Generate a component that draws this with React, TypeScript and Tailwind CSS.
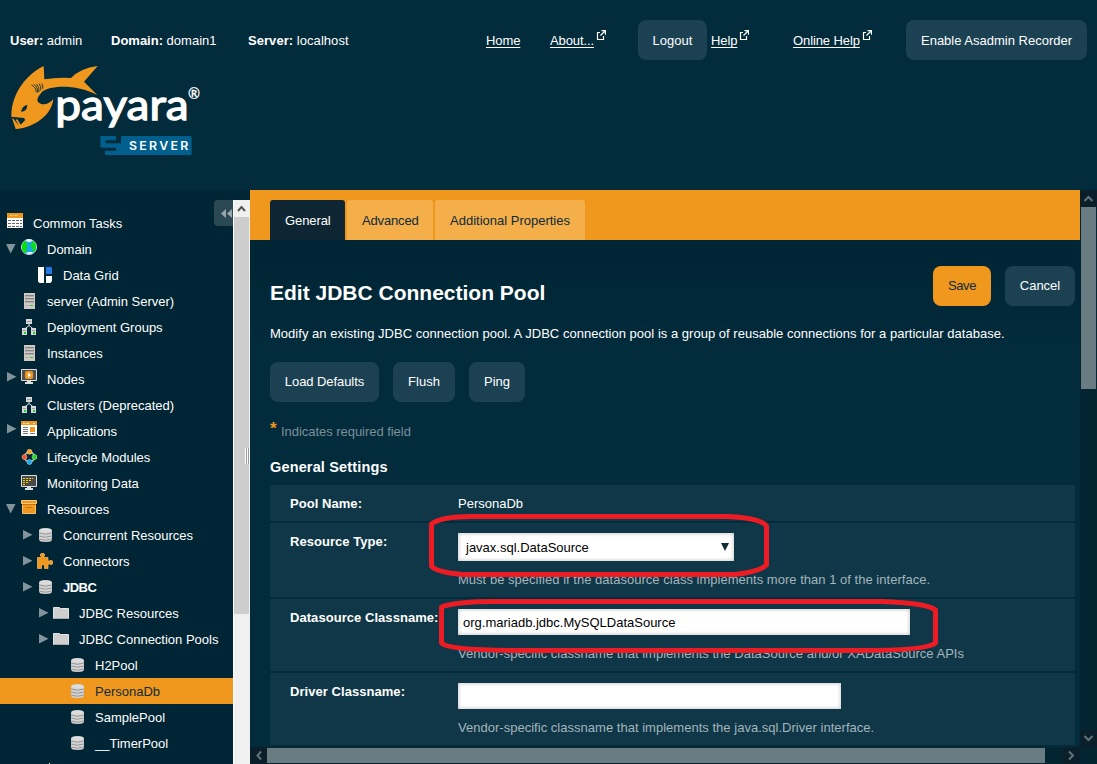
import React from "react";

type IconName =
  | "tasks" | "domain" | "grid" | "server" | "cluster" | "nodes" | "apps"
  | "lifecycle" | "monitor" | "resources" | "db" | "connector" | "folder";

const drawings: Record<IconName, React.ReactNode> = {
  tasks: (
    <g>
      <path fill="#fff" d="M0 0h16v15H0z" />
      <path fill="#f0981d" d="M0 0h16v5H0z" />
      <path stroke="#fbd9a5" d="M3 2.500h2M6 2.500h1M8 2.500h2" />
      <path stroke="#666" strokeDasharray="3 1" d="M1 7.500h3M5 7.500h10M1 10.500h14M1 13.500h14" />
    </g>
  ),
  domain: (
    <g>
      <circle cx="8" cy="8" r="7.600" fill="#18a8e8" stroke="#dff5f5" strokeWidth=".8" />
      <path fill="#0be00b" d="M4 2 6 3 5 5 7 7 5 9 6 13 4 14 1 11 1 5zM11 2l3 2 1 5-2 4-2-1 1-3-3-2 2-3z" />
      <path fill="#eef" d="M5 1q3-2 6 0l-1 2H6zM5 14l2-1 4 0 1 1q-3 2-7 0z" />
    </g>
  ),
  grid: (
    <g>
      <path fill="#fff" d="M1 0h6v16H2.500L1 14.500zM9 9h6v5l-1.500 2H9z" />
      <path fill="#2478e4" d="M9 0h5l1 1v6H9z" />
    </g>
  ),
  server: (
    <g>
      <path fill="#d0c8c4" d="M3 0h11v16H3z" />
      <path stroke="#858585" d="M4 2.500h9M4 5.500h9M4 8.500h9" />
      <path stroke="#b0b0b0" d="M4 3.500h9M4 6.500h9M4 9.500h9M4 12.500h4" />
      <path stroke="#20c820" d="M9 12.500h3" />
    </g>
  ),
  cluster: (
    <g>
      <path stroke="#dedede" fill="none" d="M8 5v1.500L3.500 10M8 6.500 12.500 10" />
      <path fill="#d8d8d8" d="M5 0h6v5H5zM1 9h5v7H1zM10 9h5v7h-5z" />
      <path stroke="#999" d="M6 2.500h4M2 11.500h3M11 11.500h3" />
      <path fill="#20d030" d="M3 13h2v2H3zM12 13h2v2h-2z" />
    </g>
  ),
  nodes: (
    <g>
      <path fill="#505050" stroke="#ddd" d="M.5 .5h15v11H.5z" />
      <path fill="#ddd" d="M6 12h4v1h2v2H4v-2h2z" />
      <rect x="4" y="2" width="8" height="8" rx="2" fill="#f0981d" />
      <path fill="#fff" d="M7 3.500 10 6 7 8.500z" />
    </g>
  ),
  apps: (
    <g>
      <path fill="#fff" d="M0 0h16v15H0z" />
      <path fill="#f0981d" d="M0 0h16v4H0zM9 6h5v5H9z" />
      <path stroke="#ffe3b5" d="M2 2.500h2M5 2.500h3M12 2.500h2" />
      <path stroke="#777" d="M2 6.500h5M2 8.500h5M2 10.500h5M2 12.500h5M9 12.500h5" />
    </g>
  ),
  lifecycle: (
    <g>
      <circle cx="8.500" cy="8" r="5" fill="none" stroke="#b9c4c8" strokeWidth="1.500" />
      <circle cx="8.500" cy="2.800" r="2.500" fill="#f5a21c" stroke="#ffe0a0" strokeWidth=".5" />
      <circle cx="3.500" cy="8" r="2.500" fill="#f5512a" stroke="#ffc0a0" strokeWidth=".5" />
      <circle cx="13.500" cy="8" r="2.500" fill="#20d820" stroke="#b0f0b0" strokeWidth=".5" />
      <circle cx="8.500" cy="13" r="2.500" fill="#18a8e8" stroke="#b0e0ff" strokeWidth=".5" />
    </g>
  ),
  monitor: (
    <g>
      <path fill="#484848" stroke="#ddd" d="M.5 .5h15v11H.5z" />
      <path stroke="#f5d000" strokeDasharray="2 1" d="M2 3.500h10M2 5.500h9M2 7.500h6M2 9.500h3" />
      <path fill="#ddd" d="M6 12h4v1h2v2H4v-2h2z" />
    </g>
  ),
  resources: (
    <g>
      <path fill="#f0981d" stroke="#f9c070" d="M1.500 3.500h13v10h-13z" />
      <path fill="#f0981d" stroke="#fcc880" d="M.5 .5h15v3H.5z" />
      <path stroke="#c87410" d="M1 4.500h14M5 7.500h6" />
    </g>
  ),
  db: (
    <g>
      <path fill="#d2d2d2" d="M2 3.500Q2 1 8.500 1T15 3.500v9Q15 15 8.500 15T2 12.500z" />
      <ellipse cx="8.500" cy="3.500" rx="6" ry="2" fill="#dcdcdc" />
      <path fill="none" stroke="#999" d="M2 6q6.500 2.500 13 0M2 9q6.500 2.500 13 0M2 12q6.500 2.500 13 0" />
    </g>
  ),
  connector: (
    <path
      fill="#f0981d"
      stroke="#f8bd6a"
      strokeWidth=".7"
      d="M.5 4.500H4V3.500A2.100 2.100 0 1 1 7 3.500V4.500h4V8h1.500a2.100 2.100 0 1 1 0 3H11v4.600H7.500V13a1.500 1.500 0 1 0-3 0v2.600H.5z"
    />
  ),
  folder: (
    <g>
      <path fill="#cfcfcf" stroke="#e3e3e3" d="M.5 2.500h6l1 1h8v10H.5z" />
      <path stroke="#aaa" d="M1 13.500h14.500" />
    </g>
  ),
};

interface Node {
  label: string;
  icon: IconName;
  pad: string;
  arrow?: "right" | "down" | "nested";
  iconTop?: string;
  bold?: boolean;
  selected?: boolean;
}

const nodes: Node[] = [
  { label: "Domain", icon: "domain", pad: "pl-[5px]", arrow: "down", iconTop: "pt-[3px]" },
  { label: "Data Grid", icon: "grid", pad: "pl-[21px]" },
  { label: "server (Admin Server)", icon: "server", pad: "pl-[5px]" },
  { label: "Deployment Groups", icon: "cluster", pad: "pl-[5px]" },
  { label: "Instances", icon: "server", pad: "pl-[5px]" },
  { label: "Nodes", icon: "nodes", pad: "pl-[5px]", arrow: "right", iconTop: "pt-[3px]" },
  { label: "Clusters (Deprecated)", icon: "cluster", pad: "pl-[5px]" },
  { label: "Applications", icon: "apps", pad: "pl-[5px]", arrow: "right", iconTop: "pt-[3px]" },
  { label: "Lifecycle Modules", icon: "lifecycle", pad: "pl-[5px]" },
  { label: "Monitoring Data", icon: "monitor", pad: "pl-[5px]" },
  { label: "Resources", icon: "resources", pad: "pl-[5px]", arrow: "down", iconTop: "pt-[4px]" },
  { label: "Concurrent Resources", icon: "db", pad: "pl-[21px]", arrow: "nested" },
  { label: "Connectors", icon: "connector", pad: "pl-[21px]", arrow: "nested" },
  { label: "JDBC", icon: "db", pad: "pl-[21px]", arrow: "nested", bold: true },
  { label: "JDBC Resources", icon: "folder", pad: "pl-[37px]", arrow: "nested" },
  { label: "JDBC Connection Pools", icon: "folder", pad: "pl-[37px]", arrow: "nested" },
  { label: "H2Pool", icon: "db", pad: "pl-[53px]" },
  { label: "PersonaDb", icon: "db", pad: "pl-[53px]", selected: true },
  { label: "SamplePool", icon: "db", pad: "pl-[53px]" },
  { label: "__TimerPool", icon: "db", pad: "pl-[53px]" },
];

function Icon({ name }: { name: IconName }) {
  return (
    <svg className="size-4 shrink-0" viewBox="0 0 16 16">
      {drawings[name]}
    </svg>
  );
}

function TreeRow({ node }: { node: Node }) {
  return (
    <div className={`flex h-[26px] ${node.pad} ${node.selected ? "bg-[#f0981d] text-[#0d2b3a]" : ""}`}>
      <svg className="h-[26px] w-4 shrink-0" viewBox="0 0 16 26" fill="#82939a">
        {node.arrow === "down" && <path d="M1 8h9.500L5.700 17.500z" />}
        {node.arrow === "right" && <path d="M2 6v9.500L11.500 10.700z" />}
        {node.arrow === "nested" && <path d="M2 8v9.500L11.500 12.700z" />}
      </svg>
      <span className={`w-[26px] shrink-0 ${node.iconTop ?? "pt-[5px]"}`}>
        <Icon name={node.icon} />
      </span>
      <span className={`leading-[27px] ${node.bold ? "font-bold tracking-[-0.5px]" : ""}`}>{node.label}</span>
    </div>
  );
}

function Logo() {
  return (
    <svg className="ml-[10px] block h-[92px] w-[192px]" viewBox="30 135 576 276">
      <path
        fill="#f0981d"
        d="M131 138C85 160 34 215 34 290L48 292 72 294 76 300 62 314 52 298 47 299 57 318 41 297 36 294 47 327C95 325 155 290 160 237 150 250 134 256 122 251 106 244 112 232 124 218 142 197 225 190 292 225L252 185 293 138Q240 145 213 174 170 172 133 178z"
      />
      <path fill="#022b3b" d="M63 275Q66 259 82 254 82 274 63 275z" />
      <path fill="none" stroke="#022b3b" strokeWidth="2.500" d="M94 195q14 6 15 22M101 193q13 8 12 25M109 192q10 8 8 24M117 191q8 9 5 20M125 190q5 8 3 16" />
      <text x="166" y="299" fill="#fff" stroke="#fff" strokeWidth="4" fontFamily="Lato, sans-serif" fontSize="128" textLength="400" lengthAdjust="spacingAndGlyphs">
        payara
      </text>
      <text x="564" y="237" fill="#fff" stroke="#fff" strokeWidth="1" fontFamily="Lato, sans-serif" fontSize="44" textLength="36" lengthAdjust="spacingAndGlyphs">
        ®
      </text>
      <path
        fill="#005f8c"
        d="M304 348h44v13h-31v9h46v-22h208q4 0 4 4v49q0 4-4 4H319q-4 0-4-4v-9h33v-9h-42q-5 0-5-5v-26q0-4 3-4z"
      />
      <text x="387" y="390" fill="#fff" fontFamily="Inter, Lato, sans-serif" fontWeight="600" fontSize="37" textLength="178">
        SERVER
      </text>
    </svg>
  );
}

function ExternalIcon() {
  return (
    <svg className="-mt-[12px] ml-[2px] h-[10px] w-[10px]" viewBox="0 0 10 10" fill="none" stroke="#fff" strokeWidth="1.200">
      <path d="M4 2.500H1.500v7h6V6M4.500 5.500 9 1M5.500 .7h4v4" />
    </svg>
  );
}

function HeaderLink({ label, width, external }: { label: string; width: string; external?: boolean }) {
  return (
    <span className={`flex shrink-0 items-center pt-[2px] ${width}`}>
      <a className="tracking-[-0.1px] underline underline-offset-[2px]">{label}</a>
      {external && <ExternalIcon />}
    </span>
  );
}

function Button({ label, className = "bg-[#1b4152] pb-px text-white" }: { label: string; className?: string }) {
  return (
    <button className={`h-10 shrink-0 rounded-[8px] text-center whitespace-nowrap ${className}`}>{label}</button>
  );
}

function Field({ label, height, hint, children }: { label: string; height: string; hint?: string; children: React.ReactNode }) {
  return (
    <div className={`flex bg-[#0f3747] pl-5 ${height}`}>
      <div className="w-[168px] shrink-0 pt-[9px] leading-[19px] font-bold tracking-[0.05px] whitespace-nowrap">{label}</div>
      <div>
        {children}
        {hint && <div className="mt-[9px] leading-[19px] tracking-[0.02px] whitespace-nowrap text-[#a3b5bd]">{hint}</div>}
      </div>
    </div>
  );
}

function Chevron({ d, stroke = "#5f737b" }: { d: string; stroke?: string }) {
  return (
    <svg className="block size-[17px]" viewBox="0 0 17 17" fill="none" stroke={stroke} strokeWidth="2">
      <path d={d} />
    </svg>
  );
}

const inset = "shadow-[inset_0_0_4px_rgba(0,0,0,0.28)]";

export default function App() {
  return (
    <div className="relative h-[764px] w-[1097px] overflow-hidden bg-[#022b3b] font-['Liberation_Sans',Arial,sans-serif] text-[13px] text-white">
      <header className="h-[190px] pt-5">
        <div className="flex h-10 items-center pl-[10px]">
          <span className="w-[101px] shrink-0 pt-[2px]"><b>User:</b> admin</span>
          <span className="w-[137px] shrink-0 pt-[2px]"><b>Domain:</b> domain1</span>
          <span className="w-[238px] shrink-0 pt-[2px] tracking-[0.05px]"><b>Server:</b> localhost</span>
          <HeaderLink label="Home" width="w-[64px]" />
          <HeaderLink label="About..." width="w-[88px]" external />
          <Button label="Logout" className="w-[69px] bg-[#1b4152] pt-px" />
          <HeaderLink label="Help" width="ml-[4px] w-[82px]" external />
          <HeaderLink label="Online Help" width="w-[113px]" external />
          <Button label="Enable Asadmin Recorder" className="w-[181px] bg-[#1b4152] pt-px" />
        </div>
        <div className="pt-[5px]"><Logo /></div>
      </header>

      <div className="flex h-[574px]">
        <aside className="relative flex w-[250px] shrink-0 bg-[#002534]">
          <div className="w-[233px] pt-5">
            <div className="flex h-[26px] pl-[7px]">
              <span className="w-[26px] shrink-0 pt-[3px]"><Icon name="tasks" /></span>
              <span className="leading-[27px]">Common Tasks</span>
            </div>
            {nodes.map((n) => (
              <TreeRow key={n.label} node={n} />
            ))}
            <svg className="mt-[7px] ml-[49px] block h-px w-px bg-white" />
          </div>
          <div className="mt-[10px] w-[17px] border-l border-white bg-[#f0f0f0]">
            <Chevron d="M4 11 7.500 7 11 11" stroke="#555" />
            <div className="h-[397px] w-[15px] bg-[#cdcdcd]" />
          </div>
          <div className="absolute top-[10px] left-[214px] flex h-[26px] w-[19px] items-center rounded-l-[4px] bg-[#8d9ba1]/30 pl-[7px]">
            <svg className="h-[9px] w-[11px]" viewBox="0 0 11 9" fill="#9aa6ab">
              <path d="M5 0v9L0 4.500zM11 0v9L6 4.500z" />
            </svg>
          </div>
          <div className="absolute top-[258px] left-[245px] flex h-4 w-[5px] justify-between border-x border-white bg-[#999] px-px">
            <span className="w-px bg-white" />
          </div>
        </aside>

        <main className="flex w-[830px] shrink-0 flex-col">
          <div className="flex h-[50px] shrink-0 items-end gap-[2px] bg-[#f0981d] pl-5 text-[#0d2b3a]">
            <div className="h-10 w-[75px] rounded-t-[3px] bg-[#0e2634] pl-[15px] leading-[41px] tracking-[-0.1px] text-white">General</div>
            <div className="h-10 w-[86px] rounded-t-[3px] bg-[#f4ae4a] pl-[15px] leading-[41px] tracking-[-0.15px]">Advanced</div>
            <div className="h-10 w-[150px] rounded-t-[3px] bg-[#f4ae4a] pl-[15px] leading-[41px]">Additional Properties</div>
          </div>
          <div className="h-[507px] overflow-hidden bg-linear-to-b from-[#002534] to-[#022b3b] to-[110px] pr-[5px] pl-5">
            <div className="flex h-[66px] pt-[26px]">
              <h1 className="grow pt-[14px] text-[21px] leading-[26px] font-bold">Edit JDBC Connection Pool</h1>
              <div className="flex gap-[14px]">
                <Button label="Save" className="w-[58px] bg-[#f0981d] pb-px tracking-[-0.4px] text-[#0d2b3a]" />
                <Button label="Cancel" className="w-[70px] bg-[#1b4152] pb-px" />
              </div>
            </div>
            <p className="mt-[18px] h-5 leading-[20px] tracking-[0.02px] whitespace-nowrap">
              Modify an existing JDBC connection pool. A JDBC connection pool is a group of reusable connections for a particular database.
            </p>
            <div className="mt-[18px] flex gap-[14px]">
              <Button label="Load Defaults" className="w-[109px] bg-[#1b4152] pb-px tracking-[-0.07px]" />
              <Button label="Flush" className="w-[62px] bg-[#1b4152] pb-px" />
              <Button label="Ping" className="w-[56px] bg-[#1b4152] pb-px" />
            </div>
            <div className="mt-[19px] flex h-5 leading-[21px] text-[#7b909a]">
              <b className="-mt-[3px] w-[11px] text-[17px] text-[#f0981d]">*</b>
              <span className="tracking-[-0.04px]">Indicates required field</span>
            </div>
            <h2 className="mt-4 h-7 text-[14.500px] leading-[20px] font-bold tracking-[0.15px]">General Settings</h2>
            <div className="flex flex-col gap-[2px]">
              <Field label="Pool Name:" height="h-[36px]">
                <div className="pt-[9px] leading-[19px]">PersonaDb</div>
              </Field>
              <Field label="Resource Type:" height="h-[74px]" hint="Must be specified if the datasource class implements more than 1 of the interface.">
                <div className={`mt-[10px] flex h-7 w-[276px] items-center justify-between bg-white pr-[5px] pl-2 text-black ${inset}`}>
                  <span className="pt-px">javax.sql.DataSource</span>
                  <svg className="h-2 w-2" viewBox="0 0 8 8"><path fill="#0d2b3a" d="M0 0h8L4 8z" /></svg>
                </div>
              </Field>
              <Field label="Datasource Classname:" height="h-[72px]" hint="Vendor-specific classname that implements the DataSource and/or XADataSource APIs">
                <div className={`mt-[10px] h-[26px] w-[452px] bg-white pl-[5px] leading-[27px] text-black ${inset}`}>org.mariadb.jdbc.MySQLDataSource</div>
              </Field>
              <Field label="Driver Classname:" height="h-[72px]" hint="Vendor-specific classname that implements the java.sql.Driver interface.">
                <div className={`mt-[10px] h-[26px] w-[383px] bg-white ${inset}`} />
              </Field>
            </div>
          </div>
          <div className="flex h-[17px] shrink-0 items-center bg-[#032431]">
            <span className="bg-[#0a1f2a]"><Chevron d="M11 4.500 7.500 8.500 11 12.500" /></span>
            <div className="h-[15px] w-[778px] bg-[#697c82]" />
            <span className="ml-auto bg-[#0a1f2a]"><Chevron d="M6 4.500 10 8.500 6 12.500" /></span>
          </div>
        </main>

        <div className="flex w-[17px] shrink-0 flex-col items-center bg-[#032431]">
          <span className="bg-[#0a1f2a]"><Chevron d="M4.500 11 8.500 7 12.500 11" /></span>
          <div className="h-[182px] w-[15px] bg-[#697c82]" />
          <span className="mt-auto mb-[17px] bg-[#0a1f2a]"><Chevron d="M4.500 6 8.500 10 12.500 6" /></span>
        </div>
      </div>

      <svg
        className="pointer-events-none absolute top-[505px] left-[420px] h-[160px] w-[530px]"
        viewBox="420 505 530 160"
        fill="none"
        stroke="#ed1c24"
        strokeWidth="5"
        strokeLinejoin="round"
      >
        <path d="M431.500 524Q441 516.500 471 516.500H727Q761 518 766.500 526V565Q759 572 735 574.500H462Q436 572 431.500 566z" />
        <path d="M441.500 607Q456 601.500 496 601.500H881Q927 603 935.500 610V643Q927 650.500 859 650.500H516Q447 650 441.500 643z" />
      </svg>
    </div>
  );
}
